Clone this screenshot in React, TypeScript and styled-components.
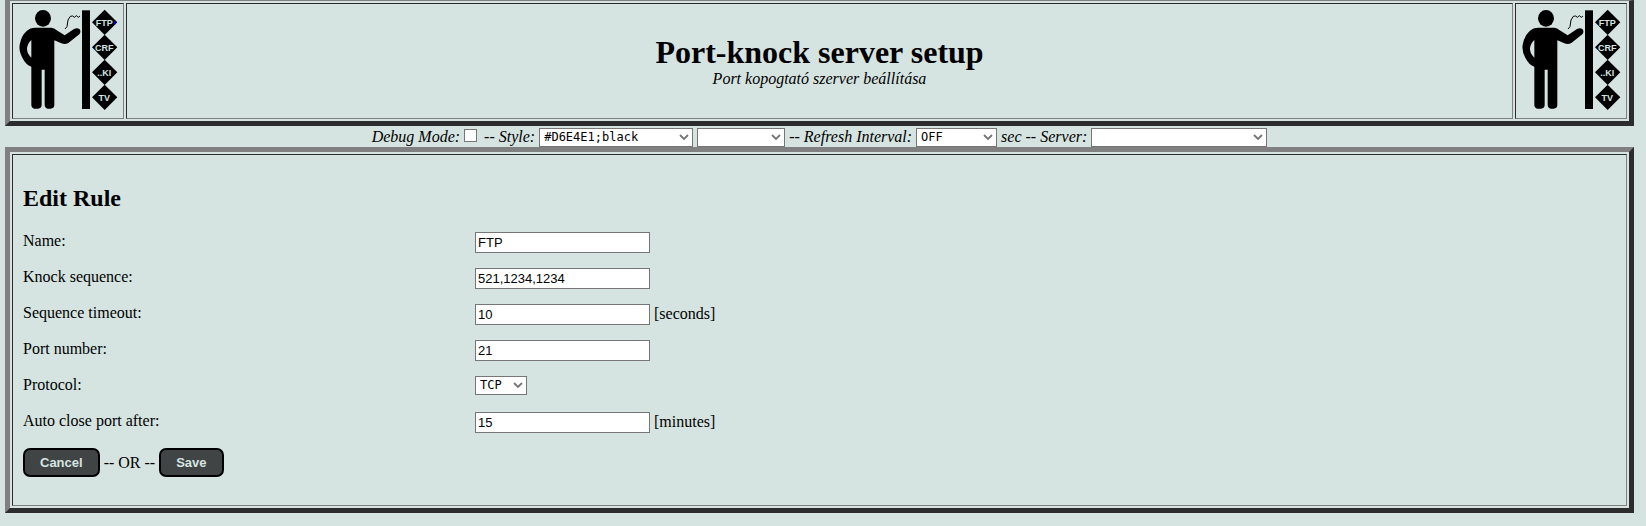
import React from "react";
import styled, { createGlobalStyle } from "styled-components";

const GlobalStyle = createGlobalStyle`
  *, *::before, *::after { box-sizing: border-box; }
  body {
    margin: 0;
    background: #d6e4e1;
    color: #000;
    font: 16px/18px "Liberation Serif", "Times New Roman", serif;
  }
`;

const Page = styled.div`
  padding: 0 12px 13px 5px;
`;

const Frame = styled.div<{ $flushTop?: boolean }>`
  display: flex;
  gap: 2px;
  padding: 2px;
  border: 5px solid;
  border-top-width: ${(p) => (p.$flushTop ? "1px" : "5px")};
  border-color: #808080 #2c2c2c #2c2c2c #808080;
`;

const Cell = styled.div`
  border: 1px solid;
  border-color: #2c2c2c #808080 #808080 #2c2c2c;
`;

const LogoCell = styled(Cell)`
  flex: none;
  svg { display: block; }
`;

const TitleCell = styled(Cell)`
  flex: 1;
  display: flex;
  flex-direction: column;
  align-items: center;
  justify-content: center;
`;

const Title = styled.h1`
  margin: 0;
  font-size: 32px;
  line-height: 36px;
`;

const Subtitle = styled.em`
  line-height: 18px;
`;

const Toolbar = styled.div`
  height: 21px;
  padding-top: 1px;
  line-height: 20px;
  text-align: center;
  font-style: italic;
  white-space: nowrap;
`;

const Check = styled.input`
  appearance: none;
  width: 13px;
  height: 13px;
  margin: 0 3px 0 4px;
  border: 1px solid #767676;
  background: #fff;
  vertical-align: 0;
  &:checked { background: #444; }
`;

const SelectBox = styled.span<{ $width: number }>`
  position: relative;
  display: inline-block;
  width: ${(p) => p.$width}px;
  height: 19px;
  vertical-align: top;
  svg {
    position: absolute;
    right: 4px;
    top: 6px;
    pointer-events: none;
  }
`;

const NativeSelect = styled.select`
  appearance: none;
  display: block;
  width: 100%;
  height: 19px;
  margin: 0;
  padding: 0 4px;
  border: 1px solid #767676;
  border-radius: 0;
  background: #fff;
  color: #000;
  font: 12px/17px "DejaVu Sans Mono", monospace;
`;

const ToolbarSelect = styled(SelectBox)`
  margin-top: 1px;
`;

const FormCell = styled(Cell)`
  flex: 1;
  padding: 29px 10px 28px;
`;

const Heading = styled.h2`
  margin: 0 0 16px;
  font-size: 24px;
  line-height: 28px;
`;

const FieldRow = styled.div`
  display: grid;
  grid-template-columns: 452px 1fr;
  height: 36px;
  padding-top: 4px;
`;

const Control = styled.div`
  display: flex;
  align-items: flex-start;
  gap: 4px;
  line-height: 20px;
`;

const TextInput = styled.input`
  width: 175px;
  height: 21px;
  margin: 0;
  padding: 1px 2px;
  border: 1px solid #767676;
  border-radius: 0;
  background: #fff;
  color: #000;
  font: 13px "Liberation Sans", Arial, sans-serif;
`;

const Actions = styled.div`
  display: flex;
  align-items: center;
  gap: 4px;
  height: 29px;
  margin-top: 4px;
`;

const Button = styled.button`
  height: 29px;
  padding: 0 15px;
  border: 2px solid #000;
  border-radius: 7px;
  background: #414444;
  color: #d6e4e1;
  font: bold 13px "Liberation Sans", Arial, sans-serif;
`;

const LogoText = styled.text`
  font: bold 27px "Liberation Sans", Arial, sans-serif;
  fill: #d6e4e1;
  text-anchor: middle;
`;

const signs = [
  { y: 67, label: "FTP" },
  { y: 142, label: "CRF" },
  { y: 217, label: "..KI" },
  { y: 292, label: "TV" },
];

function KnockLogo({ lit }: { lit?: boolean }) {
  return (
    <svg width="110" height="114" viewBox="39 12 330 342" aria-hidden="true">
      <ellipse cx="129" cy="55" rx="24" ry="25" />
      <path d="M106 83H154Q163 84 170 91L194 106L222 87Q232 82 239 88Q244 96 238 103L205 129Q195 135 184 130L163 121V316Q162 326 152 326H143Q135 325 134 316V209H125V316Q124 326 114 326H103Q95 325 94 316V200Q78 195 67 173Q56 153 59 134Q64 107 80 93Q90 83 106 83ZM94 120Q81 132 81 148Q82 162 94 173Z" />
      <path
        d="M195 87L201 80L204 60L211 49L218 48L223 52L229 47L235 52L240 48"
        fill="none"
        stroke="#000"
        strokeWidth="3"
      />
      <path d="M246 31H270V327H246Z" />
      {signs.map((s) => (
        <g key={s.label}>
          <path d={`M314 ${s.y - 38}L352 ${s.y}L314 ${s.y + 38}L276 ${s.y}Z`} />
          <LogoText x="313" y={s.y + 10}>{s.label}</LogoText>
        </g>
      ))}
      {lit && <path d="M342 64H347V73H342Z" fill="#00f" />}
    </svg>
  );
}

function Chevron() {
  return (
    <svg width="10" height="7" viewBox="0 0 10 7" aria-hidden="true">
      <path d="M1 1L5 5L9 1" fill="none" stroke="#767676" strokeWidth="1.8" />
    </svg>
  );
}

function TextField({ id, label, value, unit }: { id: string; label: string; value: string; unit?: string }) {
  return (
    <FieldRow>
      <label htmlFor={id}>{label}</label>
      <Control>
        <TextInput id={id} type="text" defaultValue={value} />
        {unit && <span>{unit}</span>}
      </Control>
    </FieldRow>
  );
}

export default function App() {
  return (
    <>
      <GlobalStyle />
      <Page>
        <Frame as="header" $flushTop>
          <LogoCell><KnockLogo lit /></LogoCell>
          <TitleCell>
            <Title>Port-knock server setup</Title>
            <Subtitle>Port kopogtató szerver beállítása</Subtitle>
          </TitleCell>
          <LogoCell><KnockLogo /></LogoCell>
        </Frame>
        <Toolbar>
          <label htmlFor="debug">Debug Mode:</label>
          <Check id="debug" type="checkbox" />
          {" -- "}
          <label htmlFor="style">Style:</label>{" "}
          <ToolbarSelect $width={154}>
            <NativeSelect id="style"><option>#D6E4E1;black</option></NativeSelect>
            <Chevron />
          </ToolbarSelect>{" "}
          <ToolbarSelect $width={88}>
            <NativeSelect aria-label="Style variant"><option></option></NativeSelect>
            <Chevron />
          </ToolbarSelect>
          {" -- "}
          <label htmlFor="refresh">Refresh Interval:</label>{" "}
          <ToolbarSelect $width={81}>
            <NativeSelect id="refresh"><option>OFF</option></NativeSelect>
            <Chevron />
          </ToolbarSelect>
          {" sec -- "}
          <label htmlFor="server">Server:</label>{" "}
          <ToolbarSelect $width={176}>
            <NativeSelect id="server"><option></option></NativeSelect>
            <Chevron />
          </ToolbarSelect>
        </Toolbar>
        <Frame as="main">
          <FormCell as="form" onSubmit={(e: React.FormEvent) => e.preventDefault()}>
            <Heading>Edit Rule</Heading>
            <TextField id="name" label="Name:" value="FTP" />
            <TextField id="sequence" label="Knock sequence:" value="521,1234,1234" />
            <TextField id="timeout" label="Sequence timeout:" value="10" unit="[seconds]" />
            <TextField id="port" label="Port number:" value="21" />
            <FieldRow>
              <label htmlFor="protocol">Protocol:</label>
              <Control>
                <SelectBox $width={52}>
                  <NativeSelect id="protocol"><option>TCP</option><option>UDP</option></NativeSelect>
                  <Chevron />
                </SelectBox>
              </Control>
            </FieldRow>
            <TextField id="autoclose" label="Auto close port after:" value="15" unit="[minutes]" />
            <Actions>
              <Button type="button">Cancel</Button>
              <span>-- OR --</span>
              <Button type="submit">Save</Button>
            </Actions>
          </FormCell>
        </Frame>
      </Page>
    </>
  );
}
